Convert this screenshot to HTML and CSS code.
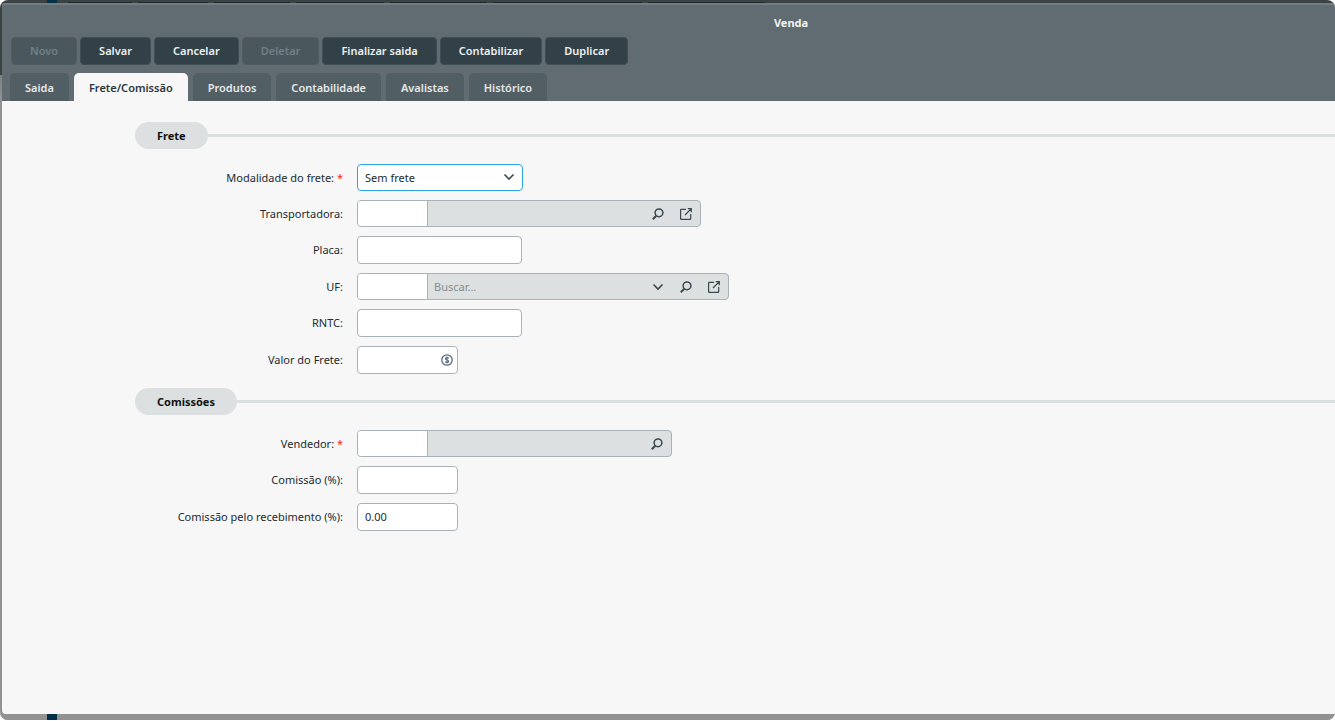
FILE: index.html
```html
<!DOCTYPE html>
<html lang="pt-BR">
<head>
<meta charset="utf-8">
<title>Venda</title>
<link rel="stylesheet" href="styles.css">
</head>
<body>
<svg class="sprite" aria-hidden="true">
  <symbol id="chevron" viewBox="0 0 12 12"><path d="M1.500 3.500 6 8l4.500-4.500" fill="none" stroke="currentColor" stroke-width="1.600"/></symbol>
  <symbol id="search" viewBox="0 0 12 12"><g fill="none" stroke="currentColor"><circle cx="7" cy="4.800" r="3.900" stroke-width="1.500"/><path d="M4.300 7.700.8 11.200" stroke-width="2"/></g></symbol>
  <symbol id="open" viewBox="0 0 12 12"><path d="M6 1.300H1.200a.6.600 0 0 0-.6.600v8.900a.6.600 0 0 0 .6.600h8.900a.6.600 0 0 0 .6-.6V6M7.800.7h3.500v3.500M11.100.9 5 7" fill="none" stroke="currentColor" stroke-width="1.200"/></symbol>
  <symbol id="money" viewBox="0 0 12 12"><g fill="none" stroke="currentColor"><circle cx="6" cy="6" r="5.200" stroke-width="1.300"/><path d="M7.700 4.500C7.400 3.800 6.800 3.600 6 3.600c-1 0-1.600.5-1.600 1.200C4.400 6.300 7.700 5.600 7.700 7.200c0 .8-.7 1.300-1.700 1.300-.9 0-1.500-.3-1.800-1M6 2.600v6.800" stroke-width="1.100"/></g></symbol>
</svg>
<div class="screen">
  <div class="backdrop-top"><i class="rail"></i><i class="back-tab w64"></i><i class="back-tab w70"></i><i class="back-tab w76"></i><i class="back-tab w88"></i><i class="back-tab w97"></i><i class="back-tab w149"></i><i class="back-tab w117"></i></div>
  <main class="window">
    <header class="head">
      <h1 class="title">Venda</h1>
      <div class="toolbar">
        <button class="btn" disabled>Novo</button>
        <button class="btn">Salvar</button>
        <button class="btn">Cancelar</button>
        <button class="btn" disabled>Deletar</button>
        <button class="btn">Finalizar saida</button>
        <button class="btn">Contabilizar</button>
        <button class="btn">Duplicar</button>
      </div>
      <nav class="tabs" role="tablist">
        <button class="tab" role="tab">Saida</button>
        <button class="tab active" role="tab" aria-selected="true">Frete/Comissão</button>
        <button class="tab" role="tab">Produtos</button>
        <button class="tab" role="tab">Contabilidade</button>
        <button class="tab" role="tab">Avalistas</button>
        <button class="tab" role="tab">Histórico</button>
      </nav>
    </header>
    <form class="form">
      <section class="group">
        <h2 class="legend"><span class="pill">Frete</span></h2>
        <div class="rows">
          <div class="row">
            <label class="label" for="modalidade">Modalidade do frete: <span class="req">*</span></label>
            <div class="select-wrap">
              <select class="select" id="modalidade"><option>Sem frete</option></select>
              <svg class="icon select-icon"><use href="#chevron"/></svg>
            </div>
          </div>
          <div class="row">
            <label class="label" for="transp">Transportadora:</label>
            <div class="lookup lookup-m">
              <input class="code" id="transp" type="text">
              <input class="desc" type="text" aria-label="Nome da transportadora" readonly>
              <button class="icon-btn" type="button" aria-label="Pesquisar"><svg class="icon"><use href="#search"/></svg></button>
              <button class="icon-btn" type="button" aria-label="Abrir"><svg class="icon"><use href="#open"/></svg></button>
            </div>
          </div>
          <div class="row">
            <label class="label" for="placa">Placa:</label>
            <input class="input" id="placa" type="text">
          </div>
          <div class="row">
            <label class="label" for="uf">UF:</label>
            <div class="lookup lookup-l">
              <input class="code" id="uf" type="text">
              <input class="desc" type="text" aria-label="Buscar UF" placeholder="Buscar...">
              <button class="icon-btn" type="button" aria-label="Expandir"><svg class="icon"><use href="#chevron"/></svg></button>
              <button class="icon-btn" type="button" aria-label="Pesquisar"><svg class="icon"><use href="#search"/></svg></button>
              <button class="icon-btn" type="button" aria-label="Abrir"><svg class="icon"><use href="#open"/></svg></button>
            </div>
          </div>
          <div class="row">
            <label class="label" for="rntc">RNTC:</label>
            <input class="input" id="rntc" type="text">
          </div>
          <div class="row">
            <label class="label" for="valor">Valor do Frete:</label>
            <div class="money">
              <input class="money-input" id="valor" type="text">
              <svg class="icon money-icon"><use href="#money"/></svg>
            </div>
          </div>
        </div>
      </section>
      <section class="group">
        <h2 class="legend"><span class="pill">Comissões</span></h2>
        <div class="rows">
          <div class="row">
            <label class="label" for="vendedor">Vendedor: <span class="req">*</span></label>
            <div class="lookup lookup-s">
              <input class="code" id="vendedor" type="text">
              <input class="desc" type="text" aria-label="Nome do vendedor" readonly>
              <button class="icon-btn" type="button" aria-label="Pesquisar"><svg class="icon"><use href="#search"/></svg></button>
            </div>
          </div>
          <div class="row">
            <label class="label" for="comissao">Comissão (%):</label>
            <input class="input short" id="comissao" type="text">
          </div>
          <div class="row">
            <label class="label" for="receb">Comissão pelo recebimento (%):</label>
            <input class="input short" id="receb" type="text" value="0.00">
          </div>
        </div>
      </section>
    </form>
  </main>
  <div class="backdrop-bottom"><i class="rail"></i></div>
</div>
</body>
</html>
```
FILE: styles.css
```css
* { box-sizing: border-box; }
body { margin: 0; background: #fff; overflow: hidden; }
body, button, input, select { font-family: "Noto Sans", sans-serif; font-size: 11px; color: #222b30; }
.sprite { display: none; }

.screen {
  display: flex;
  flex-direction: column;
  height: calc(100vh - 1px);
  border-radius: 8px;
  overflow: hidden;
  background: linear-gradient(#3b4244 0, #3b4244 75px, #7b8385 75px, #929292 100px);
}
.backdrop-top { display: flex; gap: 6px; height: 3px; padding-left: 47px; flex: none; }
.backdrop-bottom { display: flex; height: 6px; padding-left: 47px; flex: none; background: #929292; }
.rail { width: 10px; background: #02304a; }
.backdrop-top .rail { margin-right: 5px; }
.back-tab { margin-top: 2px; background: #1d292e; }
.w64 { width: 64px; }
.w70 { width: 70px; }
.w76 { width: 76px; }
.w88 { width: 88px; }
.w97 { width: 97px; }
.w149 { width: 149px; }
.w117 { width: 117px; }

.window {
  flex: 1;
  margin-left: 2px;
  border-radius: 4px 0 0 4px;
  overflow: hidden;
  background: #f7f7f7;
}
.head { background: #606c72; border-top: 2px solid #727d82; }
.title {
  margin: 0;
  padding: 10px 0 6px 245px;
  font-size: 11px;
  line-height: 16px;
  font-weight: 700;
  text-align: center;
  color: #f3f5f5;
}
.toolbar { display: flex; gap: 3px; padding-left: 9px; }
.btn {
  height: 28px;
  padding: 0 18px 2px;
  border: 1px solid #3f4e54;
  border-radius: 4px;
  background: #314147;
  color: #eef1f1;
  font-weight: 600;
}
.btn:disabled { background: #4a585e; border-color: #4f5d63; color: #718086; }
.tabs { display: flex; gap: 5px; padding: 8px 0 0 8px; }
.tab {
  height: 28px;
  padding: 0 15px;
  border: 0;
  border-radius: 5px 5px 0 0;
  background: #515e64;
  color: #e6e9ea;
  font-weight: 600;
}
.tab.active { background: #f7f7f7; color: #2b363b; }

.form { padding: 21px 0 0 133px; }
.group { margin-bottom: 14px; }
.legend { display: flex; align-items: center; margin: 0 0 15px; font-size: 11px; }
.legend::after { content: ""; flex: 1; height: 3px; background: #dcdfe0; }
.pill {
  padding: 0 22px;
  border-radius: 14px;
  background: #dce0e1;
  color: #111;
  line-height: 27px;
  font-weight: 700;
}
.rows { display: grid; gap: 9px; }
.row { display: flex; align-items: center; gap: 14px; }
.label { width: 208px; text-align: right; white-space: nowrap; line-height: 16px; }
.req { color: #f22; }

.input, .money-input, .select, .lookup { border: 1px solid #a9b2b6; border-radius: 4px; background: #fff; outline: 0; }
.input, .money-input { width: 165px; height: 28px; padding: 0 7px 2px; }
.input.short, .money, .money-input { width: 101px; }
.select-wrap { position: relative; width: 166px; height: 27px; }
.select { appearance: none; width: 100%; height: 27px; padding: 0 7px; border-color: #2ba6dc; display: block; }
.select-icon { position: absolute; right: 8px; top: 7px; pointer-events: none; }
.icon { width: 12px; height: 12px; display: block; color: #3b4850; }
.money { position: relative; }
.money-input { display: block; }
.money-icon { position: absolute; right: 5px; top: 8px; color: #5a6780; }

.lookup { display: flex; align-items: center; height: 27px; background: #dce0e1; overflow: hidden; }
.lookup-s { width: 315px; }
.lookup-m { width: 344px; }
.lookup-l { width: 372px; }
.code { width: 70px; height: 100%; padding: 0 7px; border: 0; border-right: 1px solid #a9b2b6; background: #fff; outline: 0; }
.desc { flex: 1; min-width: 0; height: 100%; padding: 0 6px; border: 0; background: transparent; outline: 0; }
.desc::placeholder { color: #858d90; opacity: 1; }
.icon-btn { width: 28px; height: 100%; padding: 0 8px; border: 0; background: transparent; }
```
